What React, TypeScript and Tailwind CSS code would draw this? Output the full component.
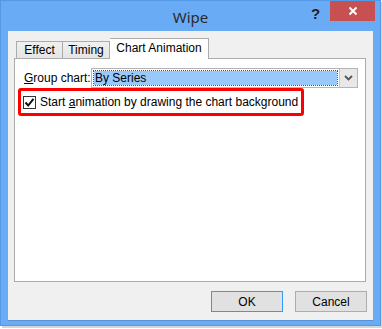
import React from "react";

export default function App() {
  const font = { fontFamily: '"Liberation Sans", Arial, sans-serif' };
  return (
    <div className="w-[382px] h-[329px] bg-white relative overflow-hidden" style={font}>
      <div className="w-[381px] h-[326px] bg-[#6aabf6] border border-[#5598e6] flex flex-col shadow-[2px_2px_0_#d6d6d6]">
        {/* title bar */}
        <div className="h-[30px] relative flex items-center justify-center">
          <span className="text-[15px] text-[#2b2b2b] pt-[2px]" style={{ fontFamily: '"Noto Sans", sans-serif' }}>Wipe</span>
          <span className="absolute left-[310px] top-[3px] text-[15px] font-bold text-[#222] leading-[20px]">?</span>
          <div className="absolute left-[329px] top-0 w-[45px] h-[20px] bg-[#c75050] flex items-center justify-center">
            <svg width="10" height="10" viewBox="0 0 10 10">
              <path d="M1.5 1.5 L8.5 8.5 M8.5 1.5 L1.5 8.5" stroke="white" strokeWidth="2" />
            </svg>
          </div>
        </div>
        {/* client */}
        <div className="mx-[7px] h-[290px] bg-[#f0f0f0] border-b border-[#5a8fd0] flex flex-col px-[6px] pt-[7px] pb-[8px]">
          <div className="flex items-end h-[20px] pl-[2px] relative z-10">
            <div className="w-[47px] h-[17px] border border-[#acacac] border-b-0 bg-[linear-gradient(#f0f0f0,#e5e5e5)] text-[12px] text-[#000] flex items-center justify-center leading-none whitespace-nowrap">Effect</div>
            <div className="w-[47px] h-[17px] border border-[#acacac] border-l-0 border-b-0 bg-[linear-gradient(#f0f0f0,#e5e5e5)] text-[12px] text-[#000] flex items-center justify-center leading-none whitespace-nowrap">Timing</div>
            <div className="w-[99px] h-[21px] -mb-px border border-[#acacac] border-l-0 border-b-0 bg-white text-[12px] text-[#000] flex items-center justify-center leading-none pb-[3px] whitespace-nowrap">Chart Animation</div>
          </div>
          <div className="w-[352px] h-[224px] bg-white border border-[#acacac] flex flex-col pt-[9px] pl-[3px]">
            <div className="flex items-center h-[20px]">
              <span className="text-[12px] text-black ml-[6px] w-[67px] shrink-0 whitespace-nowrap"><span className="underline">G</span>roup chart:</span>
              <div className="w-[267px] h-[20px] border border-[#b5b5b5] flex bg-white shrink-0">
                <div className="flex-1 m-[2px] bg-[#99c9fb] outline-1 outline-dotted outline-[#555] text-[12px] text-black leading-[14px] pl-[1px] whitespace-nowrap">By Series</div>
                <div className="w-[18px] h-full bg-[#e8e8e8] border-l border-[#c8c8c8] flex items-center justify-center">
                  <svg width="9" height="6" viewBox="0 0 9 6">
                    <path d="M1 1 L4.5 4.5 L8 1" stroke="#555" strokeWidth="1.8" fill="none" />
                  </svg>
                </div>
              </div>
            </div>
            <div className="w-[286px] h-[28px] border-[3px] border-[#ff0000] rounded-[3px] flex items-center pl-[2px]">
              <div className="w-[13px] h-[13px] shrink-0 border border-[#333] bg-white flex items-center justify-center">
                <svg width="11" height="11" viewBox="0 0 11 11">
                  <path d="M1.5 5.5 L4.2 8.5 L9.5 1.8" stroke="#111" strokeWidth="2" fill="none" />
                </svg>
              </div>
              <span className="ml-[4px] text-[12px] text-black leading-none whitespace-nowrap">Start <span className="underline">a</span>nimation by drawing the chart background</span>
            </div>
          </div>
          <div className="flex-1" />
          <div className="flex justify-end gap-[12px]">
            <div className="w-[72px] h-[21px] border border-[#3399ff] bg-[#e1e1e1] text-[12px] text-black flex items-center justify-center">OK</div>
            <div className="w-[72px] h-[21px] border border-[#adadad] bg-[#e1e1e1] text-[12px] text-black flex items-center justify-center">Cancel</div>
          </div>
        </div>
      </div>
    </div>
  );
}
